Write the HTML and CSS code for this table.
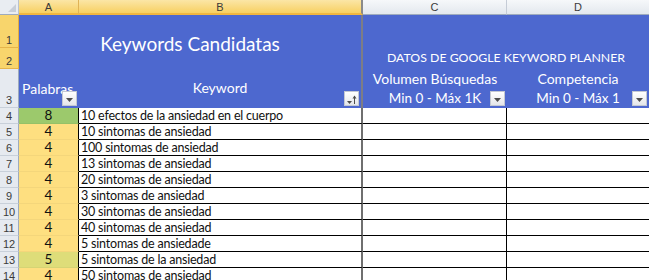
FILE: index.html
```html
<!DOCTYPE html>
<html lang="es">
<head>
  <meta charset="UTF-8">
  <meta name="viewport" content="width=device-width, initial-scale=1.0">
  <title>Keywords Candidatas</title>
  <link rel="stylesheet" href="styles.css">
</head>
<body>
  <div class="sheet">
    <!-- column headers -->
    <div class="corner"><span class="corner-tri"></span></div>
    <div class="colhead sel">A</div>
    <div class="colhead sel freeze-h">B</div>
    <div class="colhead">C</div>
    <div class="colhead last">D</div>

    <!-- header block, rows 1-3 -->
    <div class="rowhead sel">1</div>
    <div class="blue title">Keywords Candidatas</div>
    <div class="blue datos">DATOS DE GOOGLE KEYWORD PLANNER</div>
    <div class="rowhead sel">2</div>
    <div class="rowhead tall">3</div>
    <div class="blue palabras">
      <span>Palabras</span>
      <span class="filter"><svg width="7" height="4" viewBox="0 0 7 4"><path d="M0 0h7L3.5 4z" fill="#4d4d4d"/></svg></span>
    </div>
    <div class="blue keyword">
      <span>Keyword</span>
      <span class="filter"><svg width="13" height="14" viewBox="0 0 13 14"><path d="M2 9h5L4.5 12z" fill="#4d4d4d"/><path d="M9.5 12V4" stroke="#4d4d4d" stroke-width="1"/><path d="M7.5 6.5L9.5 3.5l2 3z" fill="#4d4d4d"/></svg></span>
    </div>
    <div class="blue metric">
      <span>Volumen Búsquedas</span>
      <span>Min 0 - Máx 1K</span>
      <span class="filter"><svg width="7" height="4" viewBox="0 0 7 4"><path d="M0 0h7L3.5 4z" fill="#4d4d4d"/></svg></span>
    </div>
    <div class="blue metric">
      <span>Competencia</span>
      <span>Min 0 - Máx 1</span>
      <span class="filter"><svg width="7" height="4" viewBox="0 0 7 4"><path d="M0 0h7L3.5 4z" fill="#4d4d4d"/></svg></span>
    </div>

    <!-- data rows -->
    <div class="rowhead">4</div><div class="num green">8</div><div class="kw">10 efectos de la ansiedad en el cuerpo</div><div class="c"></div><div class="d"></div>
    <div class="rowhead">5</div><div class="num yellow">4</div><div class="kw">10 sintomas de ansiedad</div><div class="c"></div><div class="d"></div>
    <div class="rowhead">6</div><div class="num yellow">4</div><div class="kw">100 sintomas de ansiedad</div><div class="c"></div><div class="d"></div>
    <div class="rowhead">7</div><div class="num yellow">4</div><div class="kw">13 sintomas de ansiedad</div><div class="c"></div><div class="d"></div>
    <div class="rowhead">8</div><div class="num yellow">4</div><div class="kw">20 sintomas de ansiedad</div><div class="c"></div><div class="d"></div>
    <div class="rowhead">9</div><div class="num yellow">4</div><div class="kw">3 sintomas de ansiedad</div><div class="c"></div><div class="d"></div>
    <div class="rowhead">10</div><div class="num yellow">4</div><div class="kw">30 sintomas de ansiedad</div><div class="c"></div><div class="d"></div>
    <div class="rowhead">11</div><div class="num yellow">4</div><div class="kw">40 sintomas de ansiedad</div><div class="c"></div><div class="d"></div>
    <div class="rowhead">12</div><div class="num yellow">4</div><div class="kw">5 sintomas de ansiedade</div><div class="c"></div><div class="d"></div>
    <div class="rowhead">13</div><div class="num lime">5</div><div class="kw">5 sintomas de la ansiedad</div><div class="c"></div><div class="d"></div>
    <div class="rowhead">14</div><div class="num yellow">4</div><div class="kw">50 sintomas de ansiedad</div><div class="c"></div><div class="d"></div>
  </div>
</body>
</html>
```

FILE: styles.css
```css
* {
  box-sizing: border-box;
}

body {
  margin: 0;
  background-color: #ffffff;
  font-family: Lato, "Open Sans", sans-serif;
  overflow: hidden;
}

.sheet {
  display: grid;
  grid-template-columns: 19px 60px 284px 144px 142px;
  grid-template-rows: 15px 33px 21px 39px repeat(11, 16px);
  width: 649px;
}

/* headers of the grid */
.corner {
  position: relative;
  background: #e9edf2;
  border-right: 1px solid #b9c2cf;
  border-bottom: 1px solid #9eabbd;
}

.corner-tri {
  position: absolute;
  right: 2px;
  bottom: 2px;
  width: 0;
  height: 0;
  border-left: 8px solid transparent;
  border-bottom: 8px solid #c7ced8;
}

.colhead {
  display: flex;
  align-items: center;
  justify-content: center;
  font-family: "Liberation Sans", sans-serif;
  font-size: 11px;
  color: #3a3a3a;
  background: linear-gradient(#f6f8fa, #e3e8ee);
  border-right: 1px solid #c5ccd6;
  border-bottom: 1px solid #9eabbd;
}

.colhead.sel {
  background: linear-gradient(#fbe6a6, #f7d062);
  border-right-color: #e0b355;
  border-bottom: 2px solid #f0b640;
}

.colhead.freeze-h {
  border-right: 2px solid #8a8a8a;
}

.colhead.last {
  border-right: none;
}

.rowhead {
  display: flex;
  align-items: flex-end;
  justify-content: center;
  padding-bottom: 1px;
  font-family: "Liberation Sans", sans-serif;
  font-size: 11px;
  color: #3a3a3a;
  background: #e6eaf0;
  border-right: 1px solid #9eabbd;
  border-bottom: 1px solid #c8d0da;
}

.rowhead.sel {
  background: #f8d56c;
  border-right-color: #e4ad3c;
  border-bottom-color: #e6b44a;
}

/* blue header block */
.blue {
  position: relative;
  background: #4d68cf;
  color: #ffffff;
  font-size: 14px;
}

.title {
  grid-column: span 2;
  grid-row: span 2;
  display: flex;
  align-items: center;
  justify-content: center;
  font-size: 19px;
  padding-top: 2px;
  border-right: 2px solid #7d7d85;
}

.datos {
  grid-column: span 2;
  grid-row: span 2;
  display: flex;
  align-items: flex-end;
  justify-content: center;
  font-size: 12.3px;
  padding-bottom: 4px;
}

.palabras {
  display: flex;
  align-items: flex-end;
  padding: 0 0 11px 3px;
}

.keyword {
  display: flex;
  align-items: flex-end;
  justify-content: center;
  padding-bottom: 12px;
  border-right: 2px solid #7d7d85;
}

.metric {
  display: flex;
  flex-direction: column;
  align-items: center;
  justify-content: flex-end;
  gap: 1px;
  padding-bottom: 1px;
}

.metric span {
  line-height: 18px;
}

.metric span:nth-child(2) {
  font-size: 13.5px;
}

.filter {
  position: absolute;
  right: 2px;
  bottom: 2px;
  width: 15px;
  height: 15px;
  display: flex;
  align-items: center;
  justify-content: center;
  padding-top: 2px;
  background: linear-gradient(#ffffff, #e4e6ea);
  border: 1px solid #c3c8d2;
}

.keyword .filter {
  padding-top: 0;
}

.metric .filter {
  width: 15px;
  line-height: normal;
}

/* data rows */
.num,
.kw,
.c,
.d {
  font-size: 12.5px;
  color: #111111;
  line-height: 15px;
}

.num {
  text-align: center;
  font-size: 13.5px;
  border-right: 1px solid #000000;
  border-bottom: 1px solid rgba(0, 0, 0, 0.04);
}

.green {
  background: #9cc96c;
}

.yellow {
  background: #fedf80;
}

.lime {
  background: #dedd79;
}

.kw {
  padding-left: 2px;
  letter-spacing: -0.2px;
  white-space: nowrap;
  overflow: hidden;
  border-bottom: 1px solid #000000;
  border-right: 2px solid #6f6f6f;
}

.c {
  border-bottom: 1px solid #000000;
  border-right: 1px solid #000000;
}

.d {
  border-bottom: 1px solid #000000;
}
```
